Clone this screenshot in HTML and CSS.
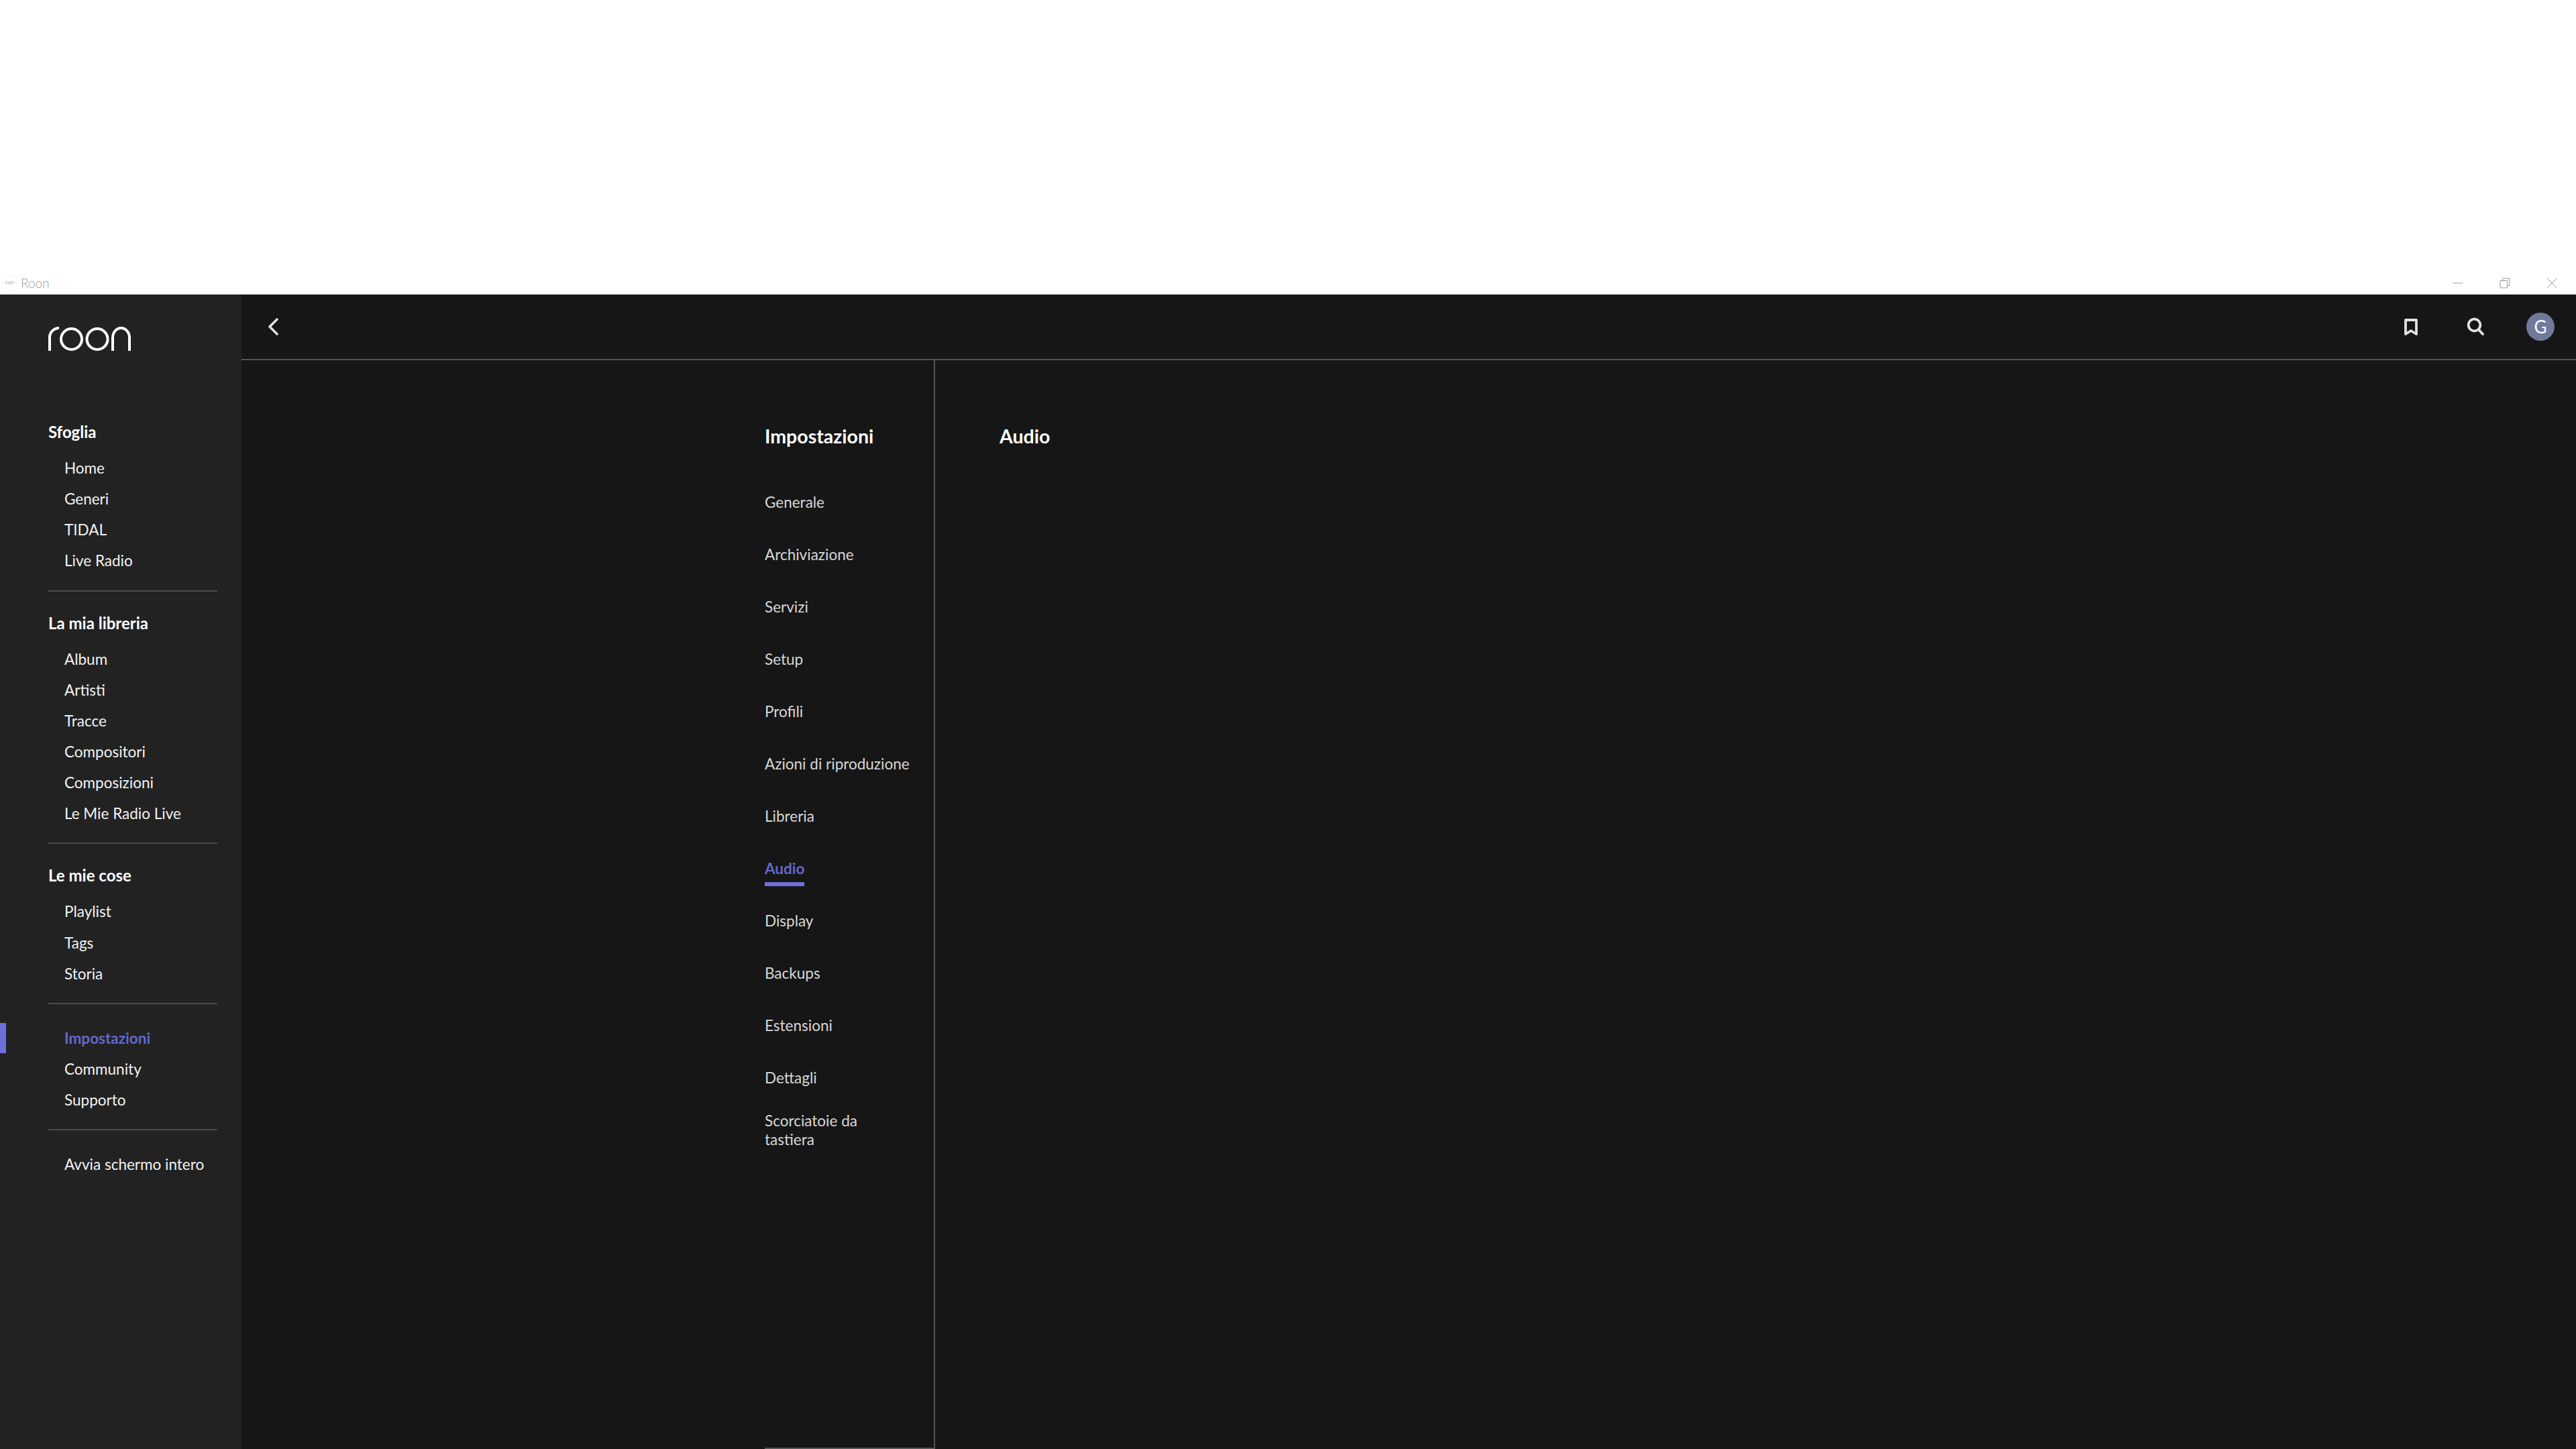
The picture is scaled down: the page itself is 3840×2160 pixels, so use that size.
FILE: index.html
```html
<!DOCTYPE html>
<html lang="it">
<head>
<meta charset="utf-8">
<title>Roon</title>
<link rel="stylesheet" href="styles.css">
</head>
<body>
<div class="blank"></div>
<div class="titlebar">
  <div class="app-id">
    <span class="app-icon"><svg width="14" height="5" viewBox="0 0 123 36" class="mark"><use href="#roon-mark"/></svg></span>
    <span class="app-name">Roon</span>
  </div>
  <div class="win-controls">
    <svg class="win-btn" width="16" height="16" viewBox="0 0 16 16"><path d="M0.5 8H15.5"/></svg>
    <svg class="win-btn" width="16" height="16" viewBox="0 0 16 16"><path d="M1 4.5H11.5V15H1Z M4.5 4.5V1H15V11.5H11.5"/></svg>
    <svg class="win-btn" width="16" height="16" viewBox="0 0 16 16"><path d="M0.5 0.5L15.5 15.5M15.5 0.5L0.5 15.5"/></svg>
  </div>
</div>
<div class="app">
  <aside class="sidebar">
    <svg class="logo" width="123" height="36" viewBox="0 0 123 36">
      <g id="roon-mark" fill="none" stroke="currentColor" stroke-width="4">
        <path d="M2 36V16A14 14 0 0 1 16 2"/>
        <circle cx="34.5" cy="18.5" r="15.5"/>
        <circle cx="73" cy="18.5" r="15.5"/>
        <path d="M96 36V16.5A12.5 14.5 0 0 1 121 16.5V36"/>
      </g>
    </svg>
    <nav class="nav-group first">
      <div class="nav-heading">Sfoglia</div>
      <a class="nav-item">Home</a>
      <a class="nav-item">Generi</a>
      <a class="nav-item">TIDAL</a>
      <a class="nav-item">Live Radio</a>
    </nav>
    <nav class="nav-group">
      <div class="nav-heading">La mia libreria</div>
      <a class="nav-item">Album</a>
      <a class="nav-item">Artisti</a>
      <a class="nav-item">Tracce</a>
      <a class="nav-item">Compositori</a>
      <a class="nav-item">Composizioni</a>
      <a class="nav-item">Le Mie Radio Live</a>
    </nav>
    <nav class="nav-group">
      <div class="nav-heading">Le mie cose</div>
      <a class="nav-item">Playlist</a>
      <a class="nav-item">Tags</a>
      <a class="nav-item">Storia</a>
    </nav>
    <nav class="nav-group plain">
      <a class="nav-item active">Impostazioni</a>
      <a class="nav-item">Community</a>
      <a class="nav-item">Supporto</a>
    </nav>
    <nav class="nav-group plain last">
      <a class="nav-item">Avvia schermo intero</a>
    </nav>
  </aside>
  <main class="main">
    <header class="topbar">
      <svg class="icon-back" width="17" height="26" viewBox="0 0 17 26"><path d="M14 2L3 13L14 24"/></svg>
      <div class="top-actions">
        <svg class="top-icon" width="40" height="28" viewBox="-8 0 40 28"><path d="M4 4H20V25L12 20L4 25Z"/></svg>
        <svg class="top-icon" width="28" height="28" viewBox="0 0 28 28"><circle cx="12.5" cy="11.5" r="8.8"/><path d="M19 18.5L25 25"/></svg>
        <div class="avatar">G</div>
      </div>
    </header>
    <div class="content">
      <section class="settings-col">
        <h2 class="settings-title">Impostazioni</h2>
        <ul class="settings-list">
          <li class="settings-item">Generale</li>
          <li class="settings-item">Archiviazione</li>
          <li class="settings-item">Servizi</li>
          <li class="settings-item">Setup</li>
          <li class="settings-item">Profili</li>
          <li class="settings-item">Azioni di riproduzione</li>
          <li class="settings-item">Libreria</li>
          <li class="settings-item active"><span>Audio</span></li>
          <li class="settings-item">Display</li>
          <li class="settings-item">Backups</li>
          <li class="settings-item">Estensioni</li>
          <li class="settings-item">Dettagli</li>
          <li class="settings-item wrap">Scorciatoie da tastiera</li>
        </ul>
      </section>
      <section class="detail">
        <h2 class="settings-title">Audio</h2>
      </section>
    </div>
  </main>
</div>
</body>
</html>
```
FILE: styles.css
```css
* { box-sizing: border-box; }
html, body { margin: 0; padding: 0; }
body {
  width: 3840px;
  height: 2160px;
  overflow: hidden;
  background: #fff;
  font-family: "Lato", "Liberation Sans", sans-serif;
  display: flex;
  flex-direction: column;
}
.blank { height: 400px; flex: none; }
.titlebar {
  height: 39px;
  flex: none;
  display: flex;
  justify-content: space-between;
  align-items: center;
  padding: 4px 28px 0 4px;
}
.app-id { display: flex; align-items: center; gap: 7px; }
.app-icon {
  width: 20px;
  height: 20px;
  border-radius: 4px;
  background: #fff;
  box-shadow: 0 0 2px #ddd;
  display: flex;
  align-items: center;
  justify-content: center;
  color: #777;
}
.mark { display: block; }
.app-name { font-size: 19px; font-weight: 300; color: #999; }
.win-controls { display: flex; gap: 54px; }
.win-btn { fill: none; stroke: #999; stroke-width: 1; }
.app { flex: 1; min-height: 0; display: flex; }
.sidebar {
  width: 360px;
  flex: none;
  background: #222;
  color: #f2f2f2;
  padding: 48px 36px 0 72px;
  display: flex;
  flex-direction: column;
  position: relative;
}
.logo { display: block; color: #fff; flex: none; margin-bottom: 98px; }
.nav-group {
  display: flex;
  flex-direction: column;
  padding-bottom: 20px;
  border-bottom: 2px solid #4c4c4c;
  margin-bottom: 24px;
}
.nav-group.plain { padding-top: 4px; }
.nav-group.last { border-bottom: 0; }
.nav-heading {
  height: 46px;
  line-height: 46px;
  font-size: 24px;
  font-weight: 700;
  color: #fff;
  margin-bottom: 8px;
}
.nav-item {
  height: 46.15px;
  line-height: 46px;
  font-size: 22.5px;
  padding-left: 24px;
  position: relative;
}
.nav-item.active { color: #6468cc; font-weight: 700; }
.nav-item.active::before {
  content: "";
  position: absolute;
  left: -72px;
  top: 0;
  width: 9px;
  height: 45px;
  background: #6d70dc;
}
.main { flex: 1; min-width: 0; background: #161616; display: flex; flex-direction: column; }
.topbar {
  height: 98px;
  flex: none;
  border-bottom: 2px solid #555;
  display: flex;
  align-items: center;
  justify-content: space-between;
  padding: 0 32px 0 39px;
}
.icon-back { fill: none; stroke: #e2e2e2; stroke-width: 3.5; stroke-linecap: round; stroke-linejoin: round; }
.top-actions { display: flex; align-items: center; gap: 62px; }
.top-icon { fill: none; stroke: #e2e2e2; stroke-width: 3.8; stroke-linecap: round; stroke-linejoin: round; }
.avatar {
  width: 42px;
  height: 42px;
  border-radius: 50%;
  background: #717a9b;
  color: #fff;
  font-size: 26px;
  line-height: 42px;
  text-align: center;
}
.content { flex: 1; min-height: 0; display: flex; }
.settings-col {
  width: 254px;
  margin-left: 780px;
  flex: none;
  border-right: 2px solid #555;
  border-bottom: 2px solid #555;
  padding-top: 93px;
}
.settings-title { margin: 0; font-size: 28.5px; font-weight: 700; line-height: 40px; color: #fff; }
.settings-list { list-style: none; margin: 39px 0 0; padding: 0; }
.settings-item {
  height: 78px;
  display: flex;
  align-items: center;
  font-size: 22.5px;
  color: #d8d8d8;
}
.settings-item.active { color: #6468cc; font-weight: 700; }
.settings-item.active span { padding: 7px 0; border-bottom: 6px solid #6d70dc; margin-top: 7px; }
.settings-item.wrap { line-height: 28px; height: 56px; margin-top: 12px; max-width: 170px; }
.detail { flex: 1; padding: 93px 0 0 96px; }
```
